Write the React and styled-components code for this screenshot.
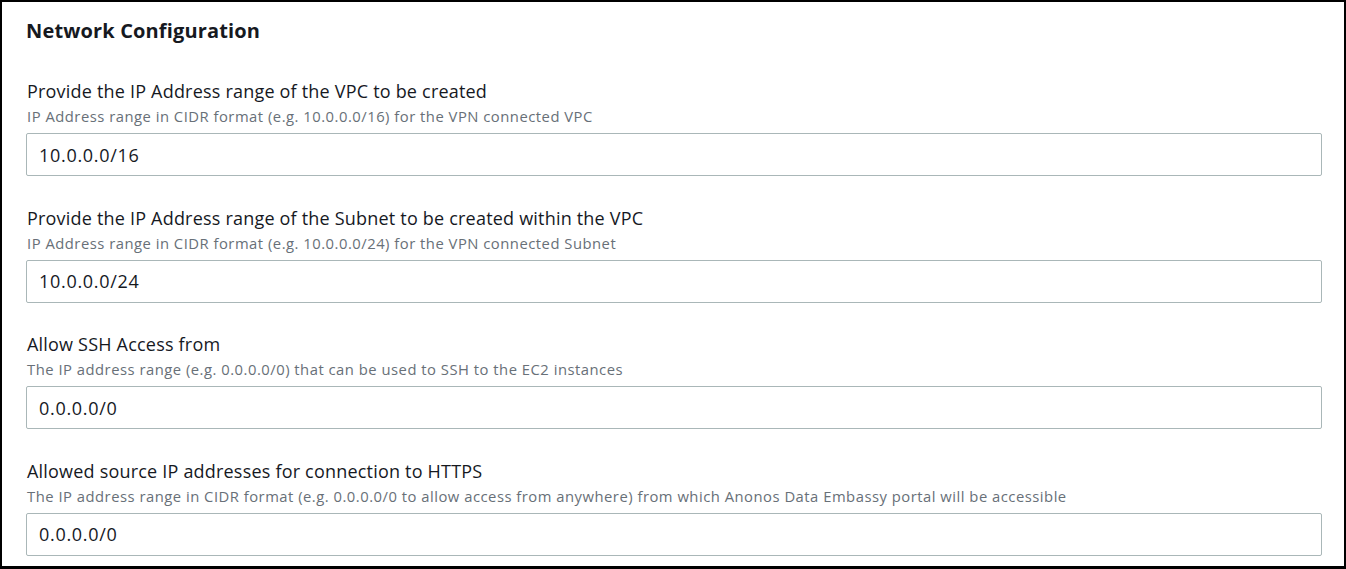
import React from "react";
import styled, { createGlobalStyle } from "styled-components";

const Global = createGlobalStyle`
  html, body { margin: 0; padding: 0; background: #ffffff; }
  body { font-family: "Open Sans", "Noto Sans", Arial, sans-serif; }
  * { box-sizing: border-box; }
`;

const Frame = styled.section`
  width: 1346px;
  height: 569px;
  border: 2px solid #000000;
  border-bottom-width: 3px;
  padding: 17px 22px 0 24px;
  overflow: hidden;
  background: #ffffff;
`;

const Title = styled.h2`
  margin: 0 0 36px 0;
  font-size: 20px;
  line-height: 24px;
  font-weight: 700;
  letter-spacing: 0.15px;
  color: #16191f;
`;

const Fields = styled.div`
  display: flex;
  flex-direction: column;
  gap: 29.67px;
`;

const Field = styled.div`
  display: flex;
  flex-direction: column;
`;

const Label = styled.label`
  font-size: 18px;
  line-height: 24px;
  letter-spacing: 0.2px;
  color: #16191f;
  padding-left: 1px;
`;

const Description = styled.div`
  margin-top: 3px;
  font-size: 14.8px;
  line-height: 20px;
  letter-spacing: 0.5px;
  color: #687078;
  padding-left: 1px;
`;

const Input = styled.input`
  margin-top: 7px;
  width: 100%;
  height: 43px;
  border: 1px solid #aab7b8;
  border-radius: 2px;
  padding: 0 12px;
  font-family: inherit;
  font-size: 18px;
  letter-spacing: 0.7px;
  color: #16191f;
  background: #ffffff;
  outline: none;
`;

const fields = [
  {
    label: "Provide the IP Address range of the VPC to be created",
    desc: "IP Address range in CIDR format (e.g. 10.0.0.0/16) for the VPN connected VPC",
    value: "10.0.0.0/16",
  },
  {
    label: "Provide the IP Address range of the Subnet to be created within the VPC",
    desc: "IP Address range in CIDR format (e.g. 10.0.0.0/24) for the VPN connected Subnet",
    value: "10.0.0.0/24",
  },
  {
    label: "Allow SSH Access from",
    desc: "The IP address range (e.g. 0.0.0.0/0) that can be used to SSH to the EC2 instances",
    value: "0.0.0.0/0",
  },
  {
    label: "Allowed source IP addresses for connection to HTTPS",
    desc: "The IP address range in CIDR format (e.g. 0.0.0.0/0 to allow access from anywhere) from which Anonos Data Embassy portal will be accessible",
    value: "0.0.0.0/0",
  },
];

export default function App() {
  return (
    <>
      <Global />
      <Frame>
        <Title>Network Configuration</Title>
        <Fields>
          {fields.map((f) => (
            <Field key={f.label}>
              <Label>{f.label}</Label>
              <Description>{f.desc}</Description>
              <Input defaultValue={f.value} readOnly />
            </Field>
          ))}
        </Fields>
      </Frame>
    </>
  );
}
